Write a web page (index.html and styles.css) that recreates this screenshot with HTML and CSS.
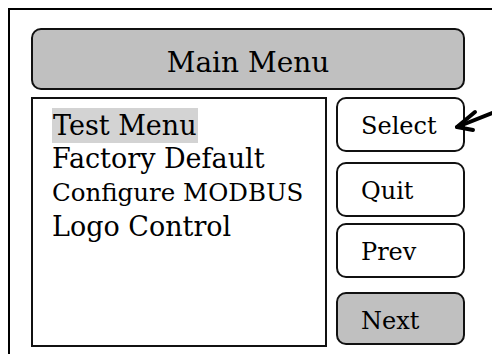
FILE: index.html
```html
<!DOCTYPE html>
<html lang="en">
	<head>
		<meta charset="UTF-8">
		<title>Main Menu</title>
		<link rel="stylesheet" href="styles.css">
	</head>
	<body>
		<div class="frame">
			<div class="title">Main Menu</div>
			<div class="panel">
				<ul class="menu">
					<li><span class="current">Test Menu</span></li>
					<li>Factory Default</li>
					<li class="small">Configure MODBUS</li>
					<li>Logo Control</li>
				</ul>
				<div class="buttons">
					<div class="btn">Select</div>
					<div class="btn">Quit</div>
					<div class="btn">Prev</div>
					<div class="btn on">Next</div>
				</div>
			</div>
			<!-- hand drawn pointer to Select -->
			<svg class="arrow" width="40" height="34" viewBox="0 0 40 34">
				<path d="M5 27 L40 13" fill="none" stroke="#000" stroke-width="4" stroke-linecap="round"/>
				<path d="M23 12 L5 27 L21 30" fill="none" stroke="#000" stroke-width="4" stroke-linecap="round" stroke-linejoin="round"/>
			</svg>
		</div>
	</body>
</html>
```

FILE: styles.css
```css
* { padding: 0; margin: 0; box-sizing: border-box; }
body { font-family: "DejaVu Serif", "Liberation Serif", serif; background: #fff; color: #000; overflow: hidden; }
ul { list-style: none; }

.frame {
	position: relative;
	margin: 8px 0 0 8px;
	width: 484px;
	height: 346px;
	overflow: hidden;
	border-left: 2px solid #000;
	border-top: 2px solid #000;
	padding: 18px 0 0 21px;
}

.title {
	width: 434px;
	height: 62px;
	background: #c0c0c0;
	border: 2px solid #111;
	border-radius: 10px;
	text-align: center;
	font-size: 28px;
	line-height: 58px;
	padding-top: 4px;
}

.panel { display: flex; margin-top: 7px; }

.menu {
	width: 296px;
	height: 250px;
	border: 2px solid #111;
	padding: 9px 0 0 19px;
	font-size: 27px;
}
.menu li { height: 34px; line-height: 34px; white-space: nowrap; }
.menu li.small { font-size: 24.5px; }
.menu .current { display: inline-block; background: #d3d3d3; height: 35px; line-height: 35px; padding: 0 1px; }

.buttons { margin-left: 9px; width: 129px; }
.btn {
	height: 55px;
	border: 2px solid #111;
	border-radius: 10px;
	padding-left: 23px;
	font-size: 24px;
	line-height: 54px;
	margin-bottom: 10px;
}
.btn:nth-child(2) { margin-bottom: 6px; }
.btn:nth-child(3) { margin-bottom: 14px; }
.btn.on { background: #c0c0c0; height: 53px; }

.arrow { position: absolute; left: 442px; top: 90px; }
```
